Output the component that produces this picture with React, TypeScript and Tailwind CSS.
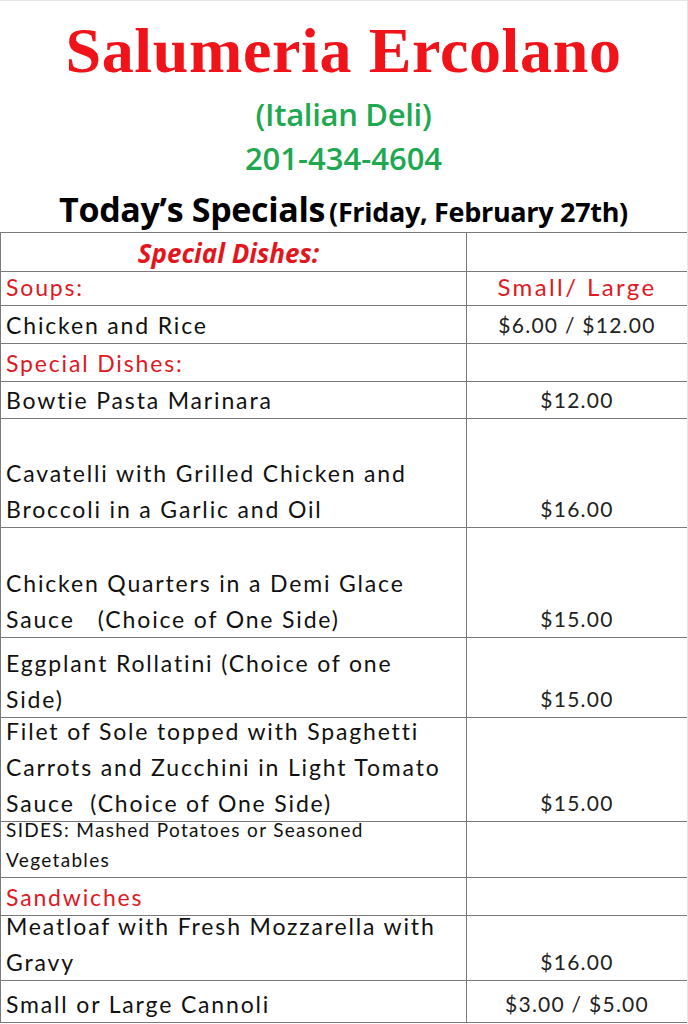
import React from "react";

const hand = { fontFamily: "Lato, 'Noto Sans', sans-serif" };

type Row = {
  h: string;
  left: React.ReactNode;
  right?: React.ReactNode;
};

const HandLines = ({ lines, red = false, small = false }: { lines: string[]; red?: boolean; small?: boolean }) => (
  <div
    className={`flex flex-col justify-end h-full pl-[5px] whitespace-pre font-normal ${
      red ? "text-[#e0181f]" : "text-[#111]"
    } ${small ? "text-[19px] leading-[30px] tracking-[0.07em] pb-[2px]" : "text-[23px] leading-[36px] tracking-[0.08em]"}`}
    style={hand}
  >
    {lines.map((l, i) => (
      <div key={i}>{l}</div>
    ))}
  </div>
);

const Price = ({ text, red = false }: { text: string; red?: boolean }) => (
  <div
    className={`flex items-end justify-center h-full leading-[36px] font-normal ${
      red ? "text-[#e0181f] text-[24px] tracking-[0.1em]" : "text-[#222] text-[21px] tracking-[0.06em]"
    }`}
    style={hand}
  >
    {text}
  </div>
);

const rows: Row[] = [
  {
    h: "h-[39px]",
    left: (
      <div
        className="flex h-full items-center justify-center pr-[10px] pt-[2px] text-[26px] font-bold italic text-[#e3161d]"
        style={{ fontFamily: "'Open Sans', sans-serif" }}
      >
        Special Dishes:
      </div>
    ),
  },
  { h: "h-[34px]", left: <HandLines lines={["Soups:"]} red />, right: <Price text="Small/ Large" red /> },
  { h: "h-[38px]", left: <HandLines lines={["Chicken and Rice"]} />, right: <Price text="$6.00 / $12.00" /> },
  { h: "h-[38px]", left: <HandLines lines={["Special Dishes:"]} red /> },
  { h: "h-[37px]", left: <HandLines lines={["Bowtie Pasta Marinara"]} />, right: <Price text="$12.00" /> },
  {
    h: "h-[109px]",
    left: <HandLines lines={["Cavatelli with Grilled Chicken and", "Broccoli in a Garlic and Oil"]} />,
    right: <Price text="$16.00" />,
  },
  {
    h: "h-[110px]",
    left: <HandLines lines={["Chicken Quarters in a Demi Glace", "Sauce   (Choice of One Side)"]} />,
    right: <Price text="$15.00" />,
  },
  {
    h: "h-[80px]",
    left: <HandLines lines={["Eggplant Rollatini (Choice of one", "Side)"]} />,
    right: <Price text="$15.00" />,
  },
  {
    h: "h-[104px]",
    left: (
      <HandLines
        lines={["Filet of Sole topped with Spaghetti", "Carrots and Zucchini in Light Tomato", "Sauce  (Choice of One Side)"]}
      />
    ),
    right: <Price text="$15.00" />,
  },
  {
    h: "h-[56px]",
    left: <HandLines lines={["SIDES: Mashed Potatoes or Seasoned", "Vegetables"]} small />,
  },
  { h: "h-[38px]", left: <HandLines lines={["Sandwiches"]} red /> },
  {
    h: "h-[65px]",
    left: <HandLines lines={["Meatloaf with Fresh Mozzarella with", "Gravy"]} />,
    right: <Price text="$16.00" />,
  },
  { h: "h-[42px]", left: <HandLines lines={["Small or Large Cannoli"]} />, right: <Price text="$3.00 / $5.00" /> },
];

export default function App() {
  return (
    <div className="w-[688px] h-[1024px] overflow-hidden bg-white border-t border-r border-[#e6e6e6]">
      <div className="h-[231px] flex flex-col items-center">
        <div
          className="mt-[12px] h-[76px] leading-[76px] text-[64px] font-bold text-[#f0141a] tracking-[0.01em]"
          style={{ fontFamily: "'Liberation Serif', serif" }}
        >
          Salumeria Ercolano
        </div>
        <div
          className="mt-[3px] h-[44px] leading-[44px] text-[31px] font-semibold text-[#1ea84f] tracking-[-0.01em]"
          style={{ fontFamily: "'Open Sans', sans-serif" }}
        >
          (Italian Deli)
        </div>
        <div
          className="h-[44px] leading-[44px] text-[31px] font-semibold text-[#1ea84f] tracking-[0em]"
          style={{ fontFamily: "'Open Sans', sans-serif" }}
        >
          201-434-4604
        </div>
        <div
          className="mt-[6px] h-[46px] leading-[46px] font-bold text-black tracking-[-0.02em]"
          style={{ fontFamily: "'Open Sans', sans-serif" }}
        >
          <span className="text-[34px]">Today’s Specials</span>{" "}
          <span className="text-[27px]">(Friday, February 27th)</span>
        </div>
      </div>
      <div className="border-t border-l border-r border-[#7a7a7a] -mr-px">
        {rows.map((r, i) => (
          <div
            key={i}
            className={`grid grid-cols-[466px_1fr] grid-rows-[minmax(0,1fr)] border-b border-[#7a7a7a] ${r.h}`}
          >
            <div className="border-r border-[#7a7a7a] min-h-0">{r.left}</div>
            <div className="min-h-0">{r.right}</div>
          </div>
        ))}
      </div>
    </div>
  );
}
